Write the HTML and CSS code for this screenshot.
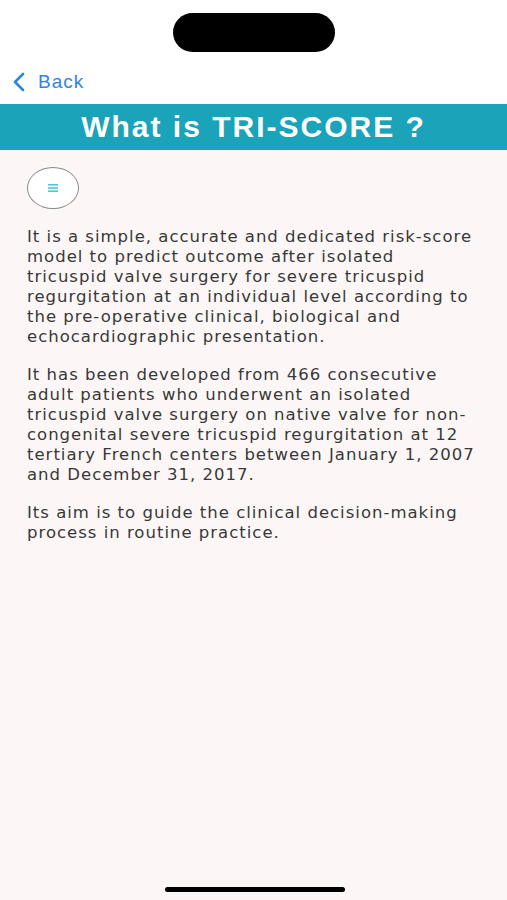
FILE: index.html
```html
<!DOCTYPE html>
<html lang="en">
<head>
    <meta charset="UTF-8">
    <meta name="viewport" content="width=device-width, initial-scale=1.0">
    <title>What is TRI-SCORE ?</title>
    <link rel="stylesheet" href="styles.css">
</head>
<body>

<div class="top">
    <div class="notch"></div>
    <a class="back" href="#">
        <svg class="chevron" width="14" height="20" viewBox="0 0 14 20">
            <path d="M11 2 L3 10 L11 18" fill="none" stroke="#2f84e6" stroke-width="2.6" stroke-linecap="round" stroke-linejoin="round"/>
        </svg>
        <span>Back</span>
    </a>
</div>

<div class="title-bar">What is TRI-SCORE ?</div>

<div class="content">
    <button class="menu-btn">
        <svg width="10" height="8" viewBox="0 0 10 8">
            <rect x="0" y="0" width="10" height="1.6" fill="#4dc9d4"/>
            <rect x="0" y="3.2" width="10" height="1.6" fill="#4dc9d4"/>
            <rect x="0" y="6.4" width="10" height="1.6" fill="#4dc9d4"/>
        </svg>
    </button>

    <p>It is a simple, accurate and dedicated risk-score model to predict outcome after isolated tricuspid valve surgery for severe tricuspid regurgitation at an individual level according to the pre-operative clinical, biological and echocardiographic presentation.</p>

    <p>It has been developed from 466 consecutive adult patients who underwent an isolated tricuspid valve surgery on native valve for non-congenital severe tricuspid regurgitation at 12 tertiary French centers between January 1, 2007 and December 31, 2017.</p>

    <p>Its aim is to guide the clinical decision-making process in routine practice.</p>
</div>

<div class="home-bar"></div>

</body>
</html>
```

FILE: styles.css
```css
/* Page */
body {
    margin: 0;
    width: 507px;
    height: 900px;
    display: flex;
    flex-direction: column;
    background: #fcf7f6;
    font-family: "Liberation Sans", Arial, sans-serif;
    overflow: hidden;
    position: relative;
}

/* Status area and back link */
.top {
    background: #fff;
    height: 104px;
    display: flex;
    flex-direction: column;
    align-items: center;
}

.notch {
    width: 162px;
    height: 39px;
    margin-top: 13px;
    border-radius: 20px;
    background: #000;
}

.back {
    align-self: flex-start;
    display: flex;
    align-items: center;
    gap: 12px;
    margin: 19px 0 0 12px;
    color: #2f84e6;
    font-size: 19px;
    letter-spacing: 1px;
    text-decoration: none;
}

/* Heading */
.title-bar {
    height: 46px;
    background: #1aa3b9;
    color: #fff;
    font-size: 30px;
    font-weight: bold;
    letter-spacing: 2px;
    display: flex;
    align-items: center;
    justify-content: center;
}

/* Body text */
.content {
    padding: 17px 30px 0 27px;
    color: #383838;
    font-family: "DejaVu Sans", sans-serif;
}

.menu-btn {
    width: 52px;
    height: 42px;
    border: 1.5px solid #8a8a8a;
    border-radius: 50%;
    background: #fff;
    display: flex;
    align-items: center;
    justify-content: center;
    padding: 0;
    margin-bottom: 18px;
}

.content p {
    margin: 0 0 18px;
    font-size: 16.5px;
    letter-spacing: 1px;
    line-height: 20px;
}

/* Home indicator */
.home-bar {
    position: absolute;
    left: 165px;
    bottom: 8px;
    width: 180px;
    height: 5px;
    border-radius: 3px;
    background: #000;
}
```
